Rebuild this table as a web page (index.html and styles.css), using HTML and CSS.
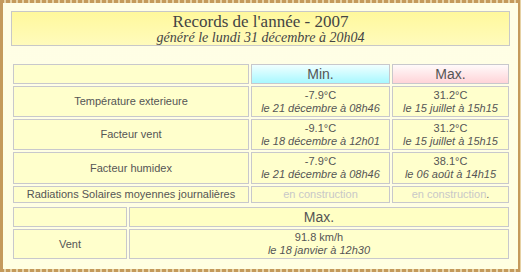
FILE: index.html
```html
<!DOCTYPE html>
<html lang="fr">
<head>
<meta charset="utf-8">
<title>Records de l'année - 2007</title>
<link rel="stylesheet" href="styles.css">
</head>
<body>
<div class="frame">
  <div class="title-box">
    <div class="title">Records de l'année - 2007</div>
    <div class="subtitle">généré le lundi 31 décembre à 20h04</div>
  </div>
  <table class="records main">
    <tr class="head">
      <td class="label c1"></td>
      <td class="hmin c2">Min.</td>
      <td class="hmax c3">Max.</td>
    </tr>
    <tr class="data">
      <td class="label">Température exterieure</td>
      <td class="val">-7.9°C<br><i>le 21 décembre à 08h46</i></td>
      <td class="val">31.2°C<br><i>le 15 juillet à 15h15</i></td>
    </tr>
    <tr class="data">
      <td class="label">Facteur vent</td>
      <td class="val">-9.1°C<br><i>le 18 décembre à 12h01</i></td>
      <td class="val">31.2°C<br><i>le 15 juillet à 15h15</i></td>
    </tr>
    <tr class="data tall">
      <td class="label">Facteur humidex</td>
      <td class="val">-7.9°C<br><i>le 21 décembre à 08h46</i></td>
      <td class="val">38.1°C<br><i>le 06 août à 14h15</i></td>
    </tr>
    <tr class="single">
      <td class="label">Radiations Solaires moyennes journalières</td>
      <td class="val soon">en construction</td>
      <td class="val soon">en construction<span class="dot">.</span></td>
    </tr>
  </table>
  <table class="records wind">
    <tr class="head">
      <td class="label w1"></td>
      <td class="hplain w2">Max.</td>
    </tr>
    <tr class="data">
      <td class="label">Vent</td>
      <td class="val">91.8 km/h<br><i>le 18 janvier à 12h30</i></td>
    </tr>
  </table>
</div>
</body>
</html>
```

FILE: styles.css
```css
html, body {
  margin: 0;
  padding: 0;
  background: #fffff0;
}

.frame {
  box-sizing: border-box;
  width: 521px;
  height: 272px;
  padding: 8px;
  border: 3px solid #c8a468;
  border-image: repeating-linear-gradient(90deg, #c49a5c 0 4px, #e6d2a6 4px 6px) 3;
  background: linear-gradient(#fffee6, #ffffe2);
}

.title-box {
  border: 1px solid #c8c8c8;
  background: linear-gradient(#fff89c, #fffbbc);
  text-align: center;
  color: #444;
  font-family: "Liberation Serif", "Times New Roman", serif;
}

.title {
  font-size: 17px;
  line-height: 19px;
}

.subtitle {
  font-size: 14px;
  line-height: 14px;
  font-style: italic;
}

.records {
  border-collapse: separate;
  border-spacing: 2px;
  width: 500px;
  table-layout: fixed;
  font-family: "Liberation Sans", Arial, sans-serif;
  color: #555;
}

.main {
  margin-top: 16px;
}

.records td {
  box-sizing: border-box;
  border: 1px solid #c8c8cc;
  background: #ffffcc;
  text-align: center;
  font-size: 11px;
  line-height: 13px;
  padding: 1px 2px;
}

.c1 { width: 236px; }
.c2 { width: 139px; }
.c3 { width: 117px; }

.w1 { width: 114px; }
.w2 { width: 380px; }

.records .head td {
  height: 20px;
  font-size: 14px;
  line-height: 16px;
}

.records .data td {
  height: 31px;
}

.records .tall td {
  height: 32px;
}

.records .single td {
  height: 17px;
}

.wind .data td {
  height: 30px;
}

.records td.hmin {
  background: linear-gradient(#f0ffff, #a8f8ff);
}

.records td.hmax {
  background: linear-gradient(#fffafa, #ffd4d8);
}

.records td.hplain {
  background: #ffffc4;
}

.val i {
  font-style: italic;
}

.soon {
  color: #c8c8c8;
}

.soon .dot {
  color: #666;
}
```
